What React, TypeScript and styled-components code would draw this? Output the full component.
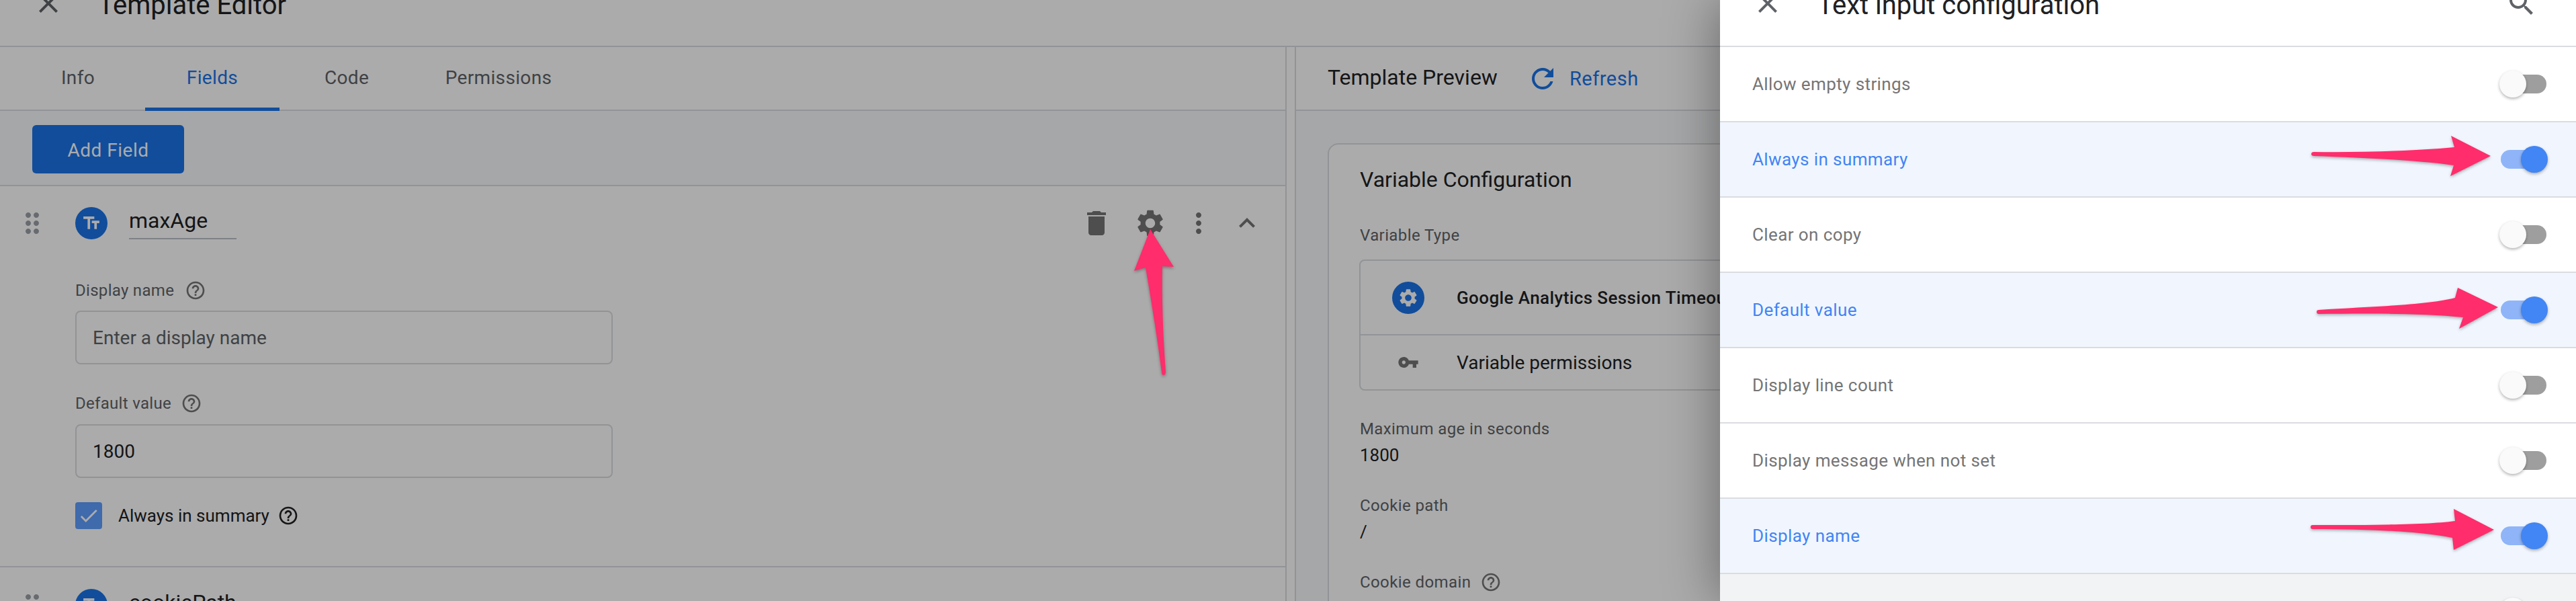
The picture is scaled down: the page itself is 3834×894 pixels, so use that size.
import React from "react";
import styled, { createGlobalStyle } from "styled-components";

const Global = createGlobalStyle`
  html, body { margin: 0; padding: 0; background: #fff; overflow: hidden; }
  * { box-sizing: border-box; }
  body { font-family: Roboto, "Liberation Sans", sans-serif; }
`;

const P = {
  close: "M19 6.41L17.59 5 12 10.59 6.41 5 5 6.41 10.59 12 5 17.59 6.41 19 12 13.41 17.59 19 19 17.59 13.41 12z",
  del: "M6 19c0 1.1.9 2 2 2h8c1.1 0 2-.9 2-2V7H6v12zM19 4h-3.5l-1-1h-5l-1 1H5v2h14V4z",
  gear: "M19.14 12.94c.04-.3.06-.61.06-.94 0-.32-.02-.64-.07-.94l2.03-1.58c.18-.14.23-.41.12-.61l-1.92-3.32c-.12-.22-.37-.29-.59-.22l-2.39.96c-.5-.38-1.03-.7-1.62-.94l-.36-2.54c-.04-.24-.24-.41-.48-.41h-3.84c-.24 0-.43.17-.47.41l-.36 2.54c-.59.24-1.13.57-1.62.94l-2.39-.96c-.22-.08-.47 0-.59.22L2.74 8.87c-.12.21-.08.47.12.61l2.03 1.58c-.05.3-.09.63-.09.94s.02.64.07.94l-2.03 1.58c-.18.14-.23.41-.12.61l1.92 3.32c.12.22.37.29.59.22l2.39-.96c.5.38 1.03.7 1.62.94l.36 2.54c.05.24.24.41.48.41h3.84c.24 0 .44-.17.47-.41l.36-2.54c.59-.24 1.13-.56 1.62-.94l2.39.96c.22.08.47 0 .59-.22l1.92-3.32c.12-.22.07-.47-.12-.61l-2.01-1.58zM12 15.6c-1.98 0-3.6-1.62-3.6-3.6s1.62-3.6 3.6-3.6 3.6 1.62 3.6 3.6-1.62 3.6-3.6 3.6z",
  more: "M12 8c1.1 0 2-.9 2-2s-.9-2-2-2-2 .9-2 2 .9 2 2 2zm0 2c-1.1 0-2 .9-2 2s.9 2 2 2 2-.9 2-2-.9-2-2-2zm0 6c-1.1 0-2 .9-2 2s.9 2 2 2 2-.9 2-2-.9-2-2-2z",
  less: "M12 8l-6 6 1.41 1.41L12 10.83l4.59 4.58L18 14z",
  help: "M11 18h2v-2h-2v2zm1-16C6.48 2 2 6.48 2 12s4.48 10 10 10 10-4.48 10-10S17.52 2 12 2zm0 18c-4.41 0-8-3.59-8-8s3.59-8 8-8 8 3.59 8 8-3.59 8-8 8zm0-14c-2.21 0-4 1.79-4 4h2c0-1.1.9-2 2-2s2 .9 2 2c0 2-3 1.75-3 5h2c0-2.25 3-2.5 3-5 0-2.21-1.79-4-4-4z",
  refresh: "M17.65 6.35C16.2 4.9 14.21 4 12 4c-4.42 0-7.99 3.58-7.99 8s3.57 8 7.99 8c3.73 0 6.84-2.55 7.73-6h-2.08c-.82 2.33-3.04 4-5.65 4-3.31 0-6-2.69-6-6s2.69-6 6-6c1.66 0 3.14.69 4.22 1.78L13 11h7V4l-2.35 2.35z",
  key: "M12.65 10C11.83 7.67 9.61 6 7 6c-3.31 0-6 2.69-6 6s2.69 6 6 6c2.61 0 4.83-1.67 5.65-4H17v4h4v-4h2v-4H12.65zM7 14c-1.1 0-2-.9-2-2s.9-2 2-2 2 .9 2 2-.9 2-2 2z",
  search: "M15.5 14h-.79l-.28-.27C15.41 12.59 16 11.11 16 9.5 16 5.91 13.09 3 9.5 3S3 5.91 3 9.5 5.91 16 9.5 16c1.61 0 3.09-.59 4.23-1.57l.27.28v.79l5 4.99L20.49 19l-4.99-5zm-6 0C7.01 14 5 11.99 5 9.5S7.01 5 9.5 5 14 7.01 14 9.5 11.99 14 9.5 14z",
  text: "M2.5 4v3h5v12h3V7h5V4h-13zm19 5h-9v3h3v7h3v-7h3V9z",
  drag: "M11 18c0 1.1-.9 2-2 2s-2-.9-2-2 .9-2 2-2 2 .9 2 2zm-2-8c-1.1 0-2 .9-2 2s.9 2 2 2 2-.9 2-2-.9-2-2-2zm0-6c-1.1 0-2 .9-2 2s.9 2 2 2 2-.9 2-2-.9-2-2-2zm6 4c1.1 0 2-.9 2-2s-.9-2-2-2-2 .9-2 2 .9 2 2 2zm0 2c-1.1 0-2 .9-2 2s.9 2 2 2 2-.9 2-2-.9-2-2-2zm0 6c-1.1 0-2 .9-2 2s.9 2 2 2 2-.9 2-2-.9-2-2-2z",
  check: "M9 16.17L4.83 12l-1.41 1.41L9 19 21 7l-1.41-1.41z",
};

const Svg = styled.svg<{ $c: string }>`
  display: block;
  flex: none;
  fill: ${(p) => p.$c};
`;
const Icon = ({ d, s = 48, c = "#757575" }: { d: string; s?: number; c?: string }) => (
  <Svg $c={c} width={s} height={s} viewBox="0 0 24 24">
    <path d={d} />
  </Svg>
);

const Root = styled.div`
  position: relative;
  width: 3834px;
  height: 894px;
  overflow: hidden;
  background: #fff;
`;
const Editor = styled.div`
  width: 100%;
`;
const Header = styled.header<{ $left: number }>`
  height: 128px;
  margin-top: -58px;
  padding: 6px 0 0 ${(p) => p.$left}px;
  display: flex;
  align-items: center;
  border-bottom: 2px solid #dadce0;
  background: #fff;
`;
const HeadIcon = styled.div`
  margin-bottom: 6px;
`;
const Title = styled.h1<{ $gap: number }>`
  margin: 0 0 0 ${(p) => p.$gap}px;
  font: 400 40px/48px Roboto, sans-serif;
  color: #202124;
  white-space: nowrap;
`;
const Columns = styled.div`
  display: flex;
  height: 824px;
`;
const LeftPane = styled.section`
  width: 1915px;
  flex: none;
  border-right: 2px solid #dadce0;
`;
const Gutter = styled.div`
  width: 12px;
  flex: none;
`;
const RightPane = styled.section`
  flex: 1;
  min-width: 0;
  border-left: 2px solid #dadce0;
  background: #f8f9fb;
`;
const Tabs = styled.nav`
  height: 95px;
  display: flex;
  border-bottom: 2px solid #dadce0;
  padding-left: 16px;
  background: #fff;
`;
const Tab = styled.div<{ $active?: boolean; $w: number }>`
  width: ${(p) => p.$w}px;
  display: flex;
  align-items: center;
  justify-content: center;
  font-size: 28px;
  letter-spacing: 0.35px;
  color: ${(p) => (p.$active ? "#1a73e8" : "#5f6368")};
  border-bottom: 5px solid ${(p) => (p.$active ? "#1a73e8" : "transparent")};
  margin-bottom: -2px;
`;
const Toolbar = styled.div`
  height: 112px;
  padding: 21px 0 0 48px;
  background: #f8f9fb;
  border-bottom: 2px solid #dadce0;
`;
const AddButton = styled.div`
  width: 226px;
  height: 72px;
  padding-top: 3px;
  border-radius: 6px;
  background: #1a73e8;
  color: #fff;
  font-size: 28px;
  font-weight: 400;
  display: flex;
  align-items: center;
  justify-content: center;
  letter-spacing: 0.5px;
`;
const Field = styled.div`
  padding: 31px 33px 0 24px;
  border-bottom: 2px solid #dadce0;
  height: 567px;
`;
const FieldHead = styled.div`
  display: flex;
  align-items: center;
  height: 48px;
`;
const Badge = styled.div<{ $flush?: boolean }>`
  width: 48px;
  height: 48px;
  margin-left: ${(p) => (p.$flush ? 0 : 40)}px;
  border-radius: 50%;
  background: #1a73e8;
  display: flex;
  align-items: center;
  justify-content: center;
  flex: none;
`;
const FieldName = styled.div`
  width: 160px;
  height: 48px;
  margin-left: 32px;
  border-bottom: 2px solid #bdc1c6;
  font-size: 32px;
  line-height: 40px;
  color: #202124;
`;
const Actions = styled.div`
  margin-left: auto;
  display: flex;
  align-items: center;
  gap: 24px;
`;
const DeleteWrap = styled.div`
  margin-right: 8px;
`;
const FormArea = styled.div`
  margin-left: 88px;
  width: 800px;
`;
const LabelRow = styled.div<{ $mt: number; $gap?: number }>`
  display: flex;
  align-items: center;
  height: 32px;
  gap: ${(p) => p.$gap ?? 16}px;
  margin-top: ${(p) => p.$mt}px;
  font-size: 24px;
  letter-spacing: 0.3px;
  color: #5f6368;
`;
const Input = styled.div<{ $placeholder?: boolean; $mt: number }>`
  height: 80px;
  margin-top: ${(p) => p.$mt}px;
  border: 2px solid #dadce0;
  border-radius: 8px;
  padding-left: 24px;
  display: flex;
  align-items: center;
  font-size: 28px;
  color: ${(p) => (p.$placeholder ? "#5f6368" : "#202124")};
`;
const CheckRow = styled.div`
  display: flex;
  align-items: center;
  height: 40px;
  margin-top: 36px;
  font-size: 26px;
  color: #202124;
`;
const CheckBox = styled.div`
  width: 40px;
  height: 40px;
  border-radius: 4px;
  background: #5f9fff;
  display: flex;
  align-items: center;
  justify-content: center;
  margin-right: 24px;
`;
const CheckHelp = styled.div`
  margin-left: 12px;
`;
const NextField = styled.div`
  padding: 32px 0 0 24px;
`;
const PreviewHead = styled.div`
  height: 95px;
  padding-left: 47px;
  display: flex;
  align-items: center;
  background: #fff;
  border-bottom: 2px solid #dadce0;
`;
const PreviewTitle = styled.div`
  font-size: 32px;
  margin-top: -4px;
  color: #202124;
  white-space: nowrap;
`;
const RefreshBtn = styled.div`
  display: flex;
  align-items: center;
  margin-left: 43px;
  gap: 16px;
  font-size: 29px;
  letter-spacing: 0.5px;
  color: #1a73e8;
`;
const PreviewBody = styled.div`
  padding: 48px 0 0 47px;
`;
const Card = styled.div`
  width: 1500px;
  height: 800px;
  background: #fff;
  border: 2px solid #dadce0;
  border-radius: 16px;
  padding: 28px 46px;
`;
const CardTitle = styled.div`
  font-size: 32px;
  line-height: 48px;
  color: #202124;
`;
const SmallLabel = styled.div<{ $mt: number }>`
  display: flex;
  align-items: center;
  gap: 14px;
  height: 32px;
  margin-top: ${(p) => p.$mt}px;
  font-size: 24px;
  letter-spacing: 0.4px;
  color: #5f6368;
`;
const Value = styled.div`
  height: 32px;
  margin-top: 7px;
  line-height: 32px;
  font-size: 26px;
  color: #202124;
`;
const InnerCard = styled.div`
  margin-top: 20px;
  margin-left: -1px;
  border: 2px solid #dadce0;
  border-radius: 8px;
  height: 195px;
`;
const InnerRow = styled.div<{ $h: number; $line?: boolean }>`
  height: ${(p) => p.$h}px;
  padding-left: 47px;
  display: flex;
  align-items: center;
  border-bottom: ${(p) => (p.$line ? "2px solid #dadce0" : "none")};
  color: #202124;
`;
const IconBox = styled.div`
  width: 48px;
  height: 48px;
  margin-right: 48px;
  display: flex;
  align-items: center;
  justify-content: center;
  flex: none;
`;
const TypeName = styled.span`
  font-weight: 500;
  font-size: 26px;
  letter-spacing: 0.4px;
`;
const InnerText = styled.span`
  font-size: 28px;
`;
const Scrim = styled.div`
  position: absolute;
  inset: 0;
  background: rgba(0, 0, 0, 0.33);
`;
const Panel = styled.aside`
  position: absolute;
  top: 0;
  right: 0;
  bottom: 0;
  width: 1274px;
  background: #fff;
  box-shadow: -6px 0 70px rgba(0, 0, 0, 0.36);
`;
const SearchWrap = styled.div`
  margin: 0 57px 6px auto;
`;
const Row = styled.div<{ $on?: boolean; $grey?: boolean }>`
  height: 112px;
  display: flex;
  align-items: center;
  padding: 0 44px 0 48px;
  border-bottom: 2px solid #dadce0;
  background: ${(p) => (p.$on ? "#f1f6fe" : p.$grey ? "#f1f3f4" : "#fff")};
  color: ${(p) => (p.$on ? "#4285f4" : "#757575")};
  font-size: 26px;
  letter-spacing: 0.4px;
`;
const Track = styled.div<{ $on?: boolean }>`
  position: relative;
  margin-left: auto;
  width: 68px;
  height: 28px;
  border-radius: 14px;
  background: ${(p) => (p.$on ? "#8fb5f8" : "#9e9e9e")};
`;
const Thumb = styled.div<{ $on?: boolean }>`
  position: absolute;
  top: -6px;
  left: ${(p) => (p.$on ? 30 : -2)}px;
  width: 40px;
  height: 40px;
  border-radius: 50%;
  background: ${(p) => (p.$on ? "#4285f4" : "#fafafa")};
  box-shadow: 0 2px 4px rgba(0, 0, 0, 0.3);
`;
const ArrowLayer = styled.svg`
  position: absolute;
  inset: 0;
  pointer-events: none;
  filter: drop-shadow(0 2px 2px rgba(0, 0, 0, 0.3));
`;

const rows: { label: string; on?: boolean; grey?: boolean }[] = [
  { label: "Allow empty strings" },
  { label: "Always in summary", on: true },
  { label: "Clear on copy" },
  { label: "Default value", on: true },
  { label: "Display line count" },
  { label: "Display message when not set" },
  { label: "Display name", on: true },
  { label: "", grey: true },
];

const arrows = [
  "M1712 341 L1747 397 L1730 396 C1729 440 1731 500 1735 553 Q1735 558 1732 558 Q1729 558 1729 554 C1722 500 1714 450 1705 398 L1688 403 Z",
  "M3707 232 L3647 262 L3652 246 C3600 238 3520 235 3444 232 Q3440 232 3440 229 Q3440 226 3444 226 C3520 227 3600 224 3653 219 L3648 202 Z",
  "M3718 457 L3660 489 L3666 472 C3610 466 3530 466 3451 467 Q3448 467 3448 464 Q3448 461 3451 461 C3530 456 3610 454 3654 443 L3658 428 Z",
  "M3712 788 L3652 818 L3650 800 C3600 790 3520 787 3442 787 Q3439 787 3439 784 Q3439 781 3442 781 C3520 781 3610 781 3654 775 L3652 757 Z",
];

export default function App() {
  return (
    <Root>
      <Global />
      <Editor>
        <Header $left={48}>
          <HeadIcon>
            <Icon d={P.close} c="#5f6368" />
          </HeadIcon>
          <Title $gap={50}>Template Editor</Title>
        </Header>
        <Columns>
          <LeftPane>
            <Tabs>
              <Tab $w={200}>Info</Tab>
              <Tab $w={200} $active>Fields</Tab>
              <Tab $w={200}>Code</Tab>
              <Tab $w={252}>Permissions</Tab>
            </Tabs>
            <Toolbar>
              <AddButton>Add Field</AddButton>
            </Toolbar>
            <Field>
              <FieldHead>
                <Icon d={P.drag} c="#9aa0a6" />
                <Badge>
                  <Icon d={P.text} s={30} c="#fff" />
                </Badge>
                <FieldName>maxAge</FieldName>
                <Actions>
                  <DeleteWrap>
                    <Icon d={P.del} />
                  </DeleteWrap>
                  <Icon d={P.gear} />
                  <Icon d={P.more} />
                  <Icon d={P.less} />
                </Actions>
              </FieldHead>
              <FormArea>
                <LabelRow $mt={60}>
                  Display name <Icon d={P.help} s={32} />
                </LabelRow>
                <Input $mt={14} $placeholder>Enter a display name</Input>
                <LabelRow $mt={42} $gap={14}>
                  Default value <Icon d={P.help} s={32} />
                </LabelRow>
                <Input $mt={15}>1800</Input>
                <CheckRow>
                  <CheckBox>
                    <Icon d={P.check} s={34} c="#fff" />
                  </CheckBox>
                  Always in summary
                  <CheckHelp>
                    <Icon d={P.help} s={32} c="#202124" />
                  </CheckHelp>
                </CheckRow>
              </FormArea>
            </Field>
            <NextField>
              <FieldHead>
                <Icon d={P.drag} c="#9aa0a6" />
                <Badge>
                  <Icon d={P.text} s={30} c="#fff" />
                </Badge>
                <FieldName>cookiePath</FieldName>
              </FieldHead>
            </NextField>
          </LeftPane>
          <Gutter />
          <RightPane>
            <PreviewHead>
              <PreviewTitle>Template Preview</PreviewTitle>
              <RefreshBtn>
                <Icon d={P.refresh} s={48} c="#1a73e8" />
                Refresh
              </RefreshBtn>
            </PreviewHead>
            <PreviewBody>
              <Card>
                <CardTitle>Variable Configuration</CardTitle>
                <SmallLabel $mt={43}>Variable Type</SmallLabel>
                <InnerCard>
                  <InnerRow $h={111} $line>
                    <IconBox>
                      <Badge $flush>
                        <Icon d={P.gear} s={32} c="#fff" />
                      </Badge>
                    </IconBox>
                    <TypeName>Google Analytics Session Timeout</TypeName>
                  </InnerRow>
                  <InnerRow $h={80}>
                    <IconBox>
                      <Icon d={P.key} s={32} />
                    </IconBox>
                    <InnerText>Variable permissions</InnerText>
                  </InnerRow>
                </InnerCard>
                <SmallLabel $mt={41}>Maximum age in seconds</SmallLabel>
                <Value>1800</Value>
                <SmallLabel $mt={43}>Cookie path</SmallLabel>
                <Value>/</Value>
                <SmallLabel $mt={43}>
                  Cookie domain <Icon d={P.help} s={32} />
                </SmallLabel>
              </Card>
            </PreviewBody>
          </RightPane>
        </Columns>
      </Editor>
      <Scrim />
      <Panel>
        <Header $left={47}>
          <HeadIcon>
            <Icon d={P.close} c="#5f6368" />
          </HeadIcon>
          <Title $gap={50}>Text input configuration</Title>
          <SearchWrap>
            <Icon d={P.search} c="#5f6368" />
          </SearchWrap>
        </Header>
        {rows.map((r, i) => (
          <Row key={i} $on={r.on} $grey={r.grey}>
            {r.label}
            <Track $on={r.on}>
              <Thumb $on={r.on} />
            </Track>
          </Row>
        ))}
      </Panel>
      <ArrowLayer width="3834" height="894" viewBox="0 0 3834 894">
        {arrows.map((d, i) => (
          <path key={i} d={d} fill="#ff2d6b" />
        ))}
      </ArrowLayer>
    </Root>
  );
}
